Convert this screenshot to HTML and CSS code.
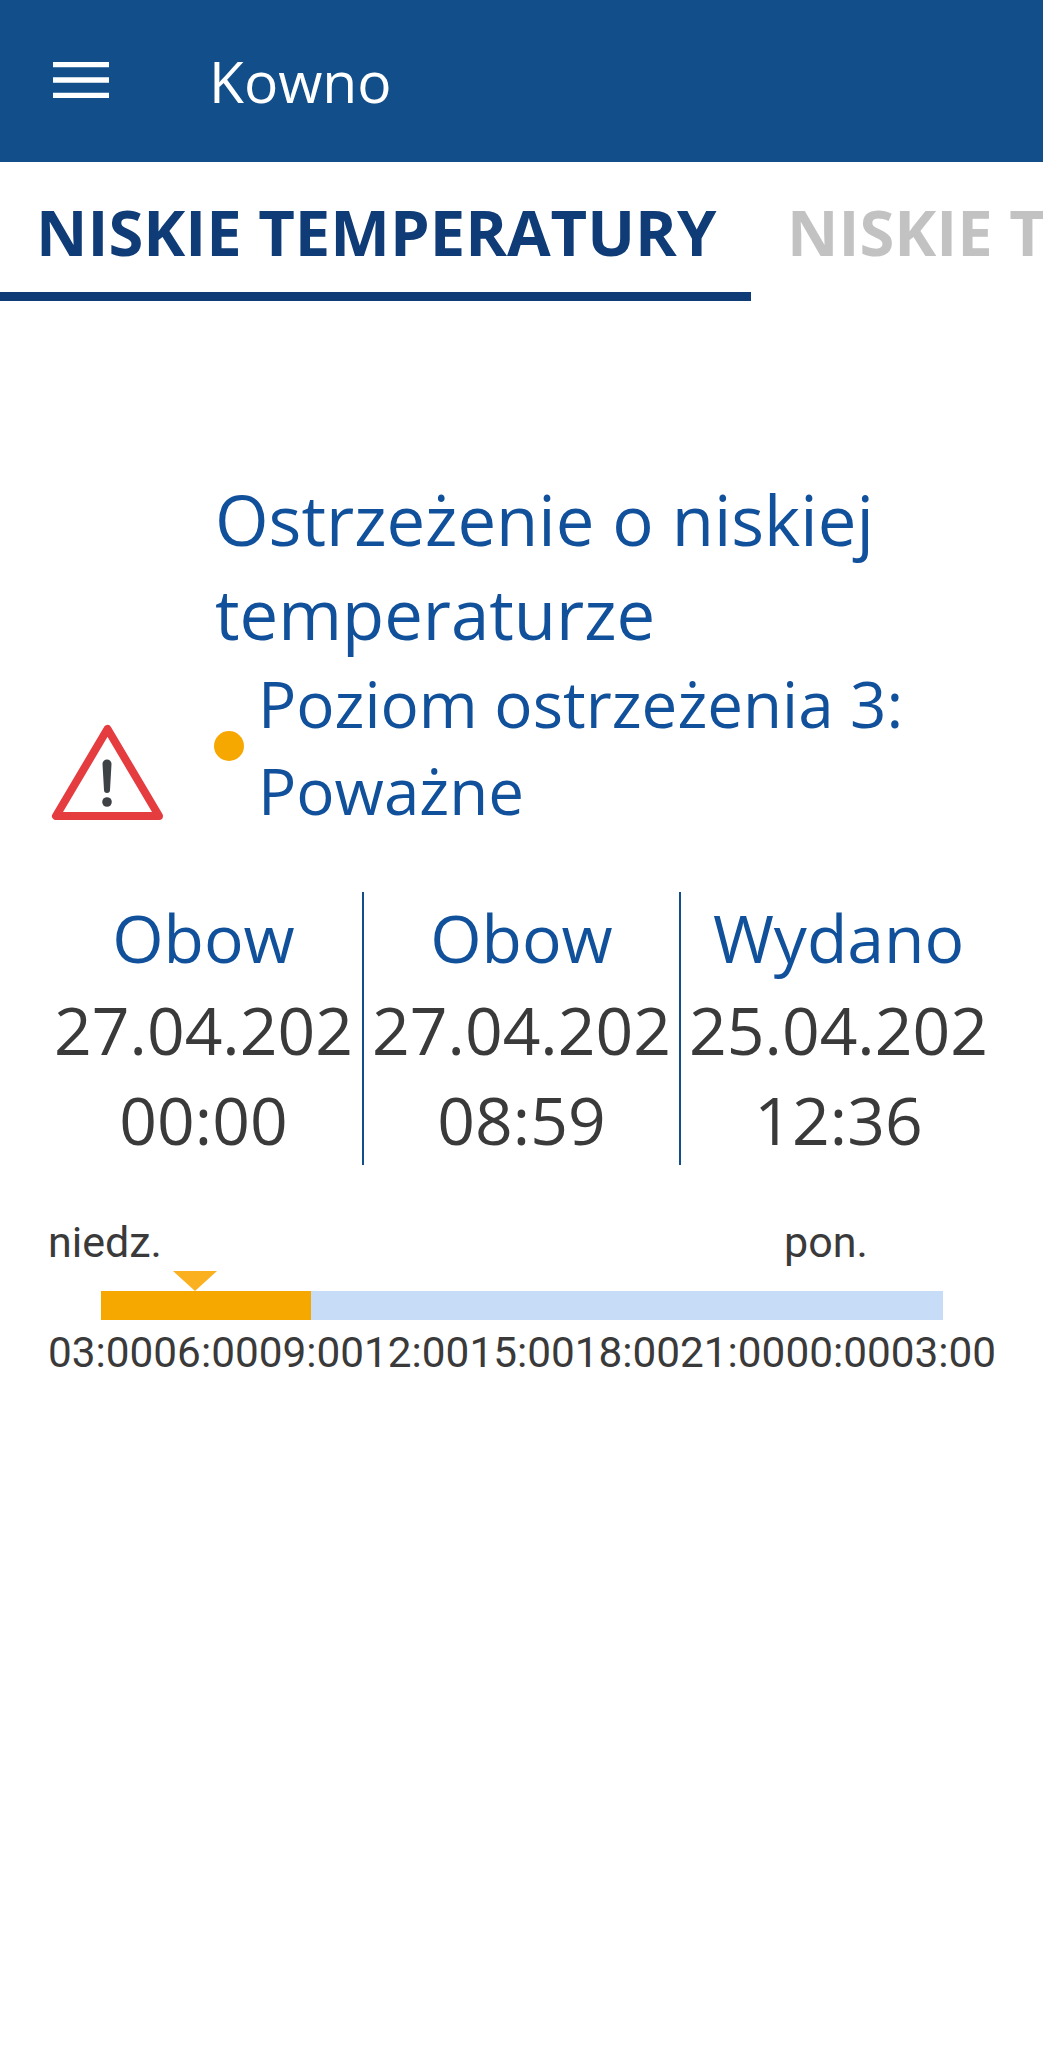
FILE: index.html
```html
<!DOCTYPE html>
<html lang="pl">
<head>
<meta charset="utf-8">
<title>Kowno</title>
<link rel="stylesheet" href="styles.css">
</head>
<body>
<header class="appbar">
  <svg class="menu" width="56" height="36" viewBox="0 0 56 36"><path d="M0 2.500H56M0 18H56M0 33.500H56" stroke="#fff" stroke-width="5.500" fill="none"/></svg>
  <h1 class="city">Kowno</h1>
</header>
<nav class="tabs">
  <div class="tab active">NISKIE TEMPERATURY</div>
  <div class="tab">NISKIE TEMPERATURY</div>
</nav>
<main class="content">
  <section class="warning">
    <svg class="triangle" width="118" height="100" viewBox="0 0 118 100"><path d="M59.500 7L8 94H111Z" fill="#fff" stroke="#e53c40" stroke-width="8" stroke-linejoin="round"/><path d="M54.500 42a4.500 4.500 0 0 1 9 0L62 68a3 3 0 0 1-6 0Z" fill="#3f4245"/><circle cx="59" cy="80" r="4.800" fill="#3f4245"/></svg>
    <div class="warning-text">
      <h2 class="warning-title">Ostrzeżenie o niskiej temperaturze</h2>
      <div class="level">
        <span class="dot"></span>
        <p class="level-text">Poziom ostrzeżenia 3: Poważne</p>
      </div>
    </div>
  </section>
  <section class="times">
    <div class="time-col"><div class="time-label">Obow</div><div class="time-value first">27.04.202</div><div class="time-value">00:00</div></div>
    <div class="time-col"><div class="time-label">Obow</div><div class="time-value first">27.04.202</div><div class="time-value">08:59</div></div>
    <div class="time-col"><div class="time-label">Wydano</div><div class="time-value first">25.04.202</div><div class="time-value">12:36</div></div>
  </section>
  <section class="timeline">
    <div class="days"><span>niedz.</span><span>pon.</span></div>
    <div class="marker-row"><span class="marker"></span></div>
    <div class="bar"><div class="bar-fill"></div></div>
    <div class="hours"><span>03:00</span><span>06:00</span><span>09:00</span><span>12:00</span><span>15:00</span><span>18:00</span><span>21:00</span><span>00:00</span><span>03:00</span></div>
  </section>
</main>
</body>
</html>
```
FILE: styles.css
```css
* { box-sizing: border-box; }
html, body { margin: 0; padding: 0; background: #fff; }
body { width: 1043px; height: 2048px; overflow: hidden; font-family: "Open Sans", sans-serif; }
.appbar { height: 162px; background: #124f8a; display: flex; align-items: center; padding: 0 0 0 53px; }
.menu { flex: none; margin-top: -2px; }
.city { margin: 0 0 0 100px; font-size: 57px; font-weight: 400; color: #fff; line-height: 1; }
.tabs { display: flex; height: 139px; overflow: hidden; }
.tab { flex: none; width: 751px; padding: 27px 0 0 36px; font-size: 63.300px; line-height: 86px; font-weight: 700; color: #c2c2c2; white-space: nowrap; height: 139px; }
.tab.active { color: #0f3b76; border-bottom: 9px solid #0f3b76; }
.content { padding: 0; }
.warning { display: flex; align-items: flex-end; padding: 171px 0 0 48px; }
.triangle { flex: none; margin-bottom: 12px; }
.warning-text { margin-left: 49px; width: 740px; }
.warning-title { margin: 0; font-size: 68.900px; line-height: 94px; font-weight: 400; color: #11509a; }
.level { display: flex; align-items: flex-start; }
.dot { flex: none; width: 30px; height: 30px; border-radius: 50%; background: #f6a800; margin-top: 71px; margin-left: -1px; }
.level-text { margin: 0 0 0 14px; font-size: 63.700px; line-height: 87px; color: #11509a; }
.times { display: flex; margin: 58px 0 0 45px; width: 952px; }
.time-col { width: 317px; height: 273px; text-align: center; overflow: hidden; }
.time-col + .time-col { border-left: 2px solid #124f8a; }
.time-label { font-size: 66px; line-height: 90px; color: #11509a; white-space: nowrap; }
.time-value { font-size: 66px; line-height: 90px; color: #3a3a3a; white-space: nowrap; }
.time-value.first { margin-top: 2px; }
.timeline { margin: 52px 0 0 48px; width: 995px; font-family: Roboto, sans-serif; color: #3a3a3a; }
.days { display: flex; font-size: 43px; line-height: 50px; }
.days span:first-child { width: 736px; }
.marker-row { height: 24px; padding: 4px 0 0 125px; }
.marker { display: block; width: 0; height: 0; border-left: 22px solid transparent; border-right: 22px solid transparent; border-top: 20px solid #fbb020; }
.bar { margin-left: 53px; width: 842px; height: 29px; background: #c7dcf7; }
.bar-fill { width: 210px; height: 100%; background: #f6a800; }
.hours { display: flex; font-size: 42.300px; line-height: 50px; margin-top: 8px; white-space: nowrap; }
```
